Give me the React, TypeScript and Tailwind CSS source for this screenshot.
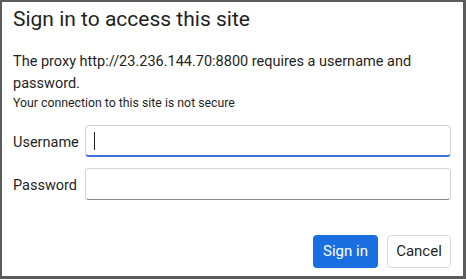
import React from 'react';

export default function App() {
  return (
    <div className="w-[466px] h-[279px] bg-white border-2 border-r-[3px] border-b-[3px] border-[#5b5b5b] flex flex-col text-[#1f1f1f] font-['Roboto',sans-serif]">
      <div className="pl-[11px] pr-[12px] pt-[3px]">
        <h1 className="text-[21px] leading-[28px]">Sign in to access this site</h1>
        <p className="mt-[18px] text-[14.5px] leading-[22px]">
          The proxy http://23.236.144.70:8800 requires a username and password.
        </p>
        <p className="text-[12.3px] leading-[16px]">Your connection to this site is not secure</p>
      </div>

      <div className="mt-[14px] pl-[11px] pr-[12px] grid grid-cols-[72px_1fr] gap-y-[11px] items-center">
        <label className="text-[14.5px] pt-[3px]">Username</label>
        <div className="h-[32px] rounded-[4px] border border-[#d4d4d4] border-b-2 border-b-[#3b6fd0] flex items-center pl-[8px]">
          <span className="w-px h-[18px] bg-[#202124]" />
        </div>
        <label className="text-[14.5px] pt-[3px]">Password</label>
        <div className="h-[32px] rounded-[4px] border border-[#d4d4d4] border-b-[#8a8a8a]" />
      </div>

      <div className="mt-auto mb-[8px] pr-[12px] flex justify-end gap-[9px]">
        <button className="w-[65px] h-[33px] rounded-[4px] bg-[#1a6fe0] text-white text-[15px]">Sign in</button>
        <button className="w-[64px] h-[33px] rounded-[4px] border border-[#dcdcdc] bg-white text-[15px]">Cancel</button>
      </div>
    </div>
  );
}
